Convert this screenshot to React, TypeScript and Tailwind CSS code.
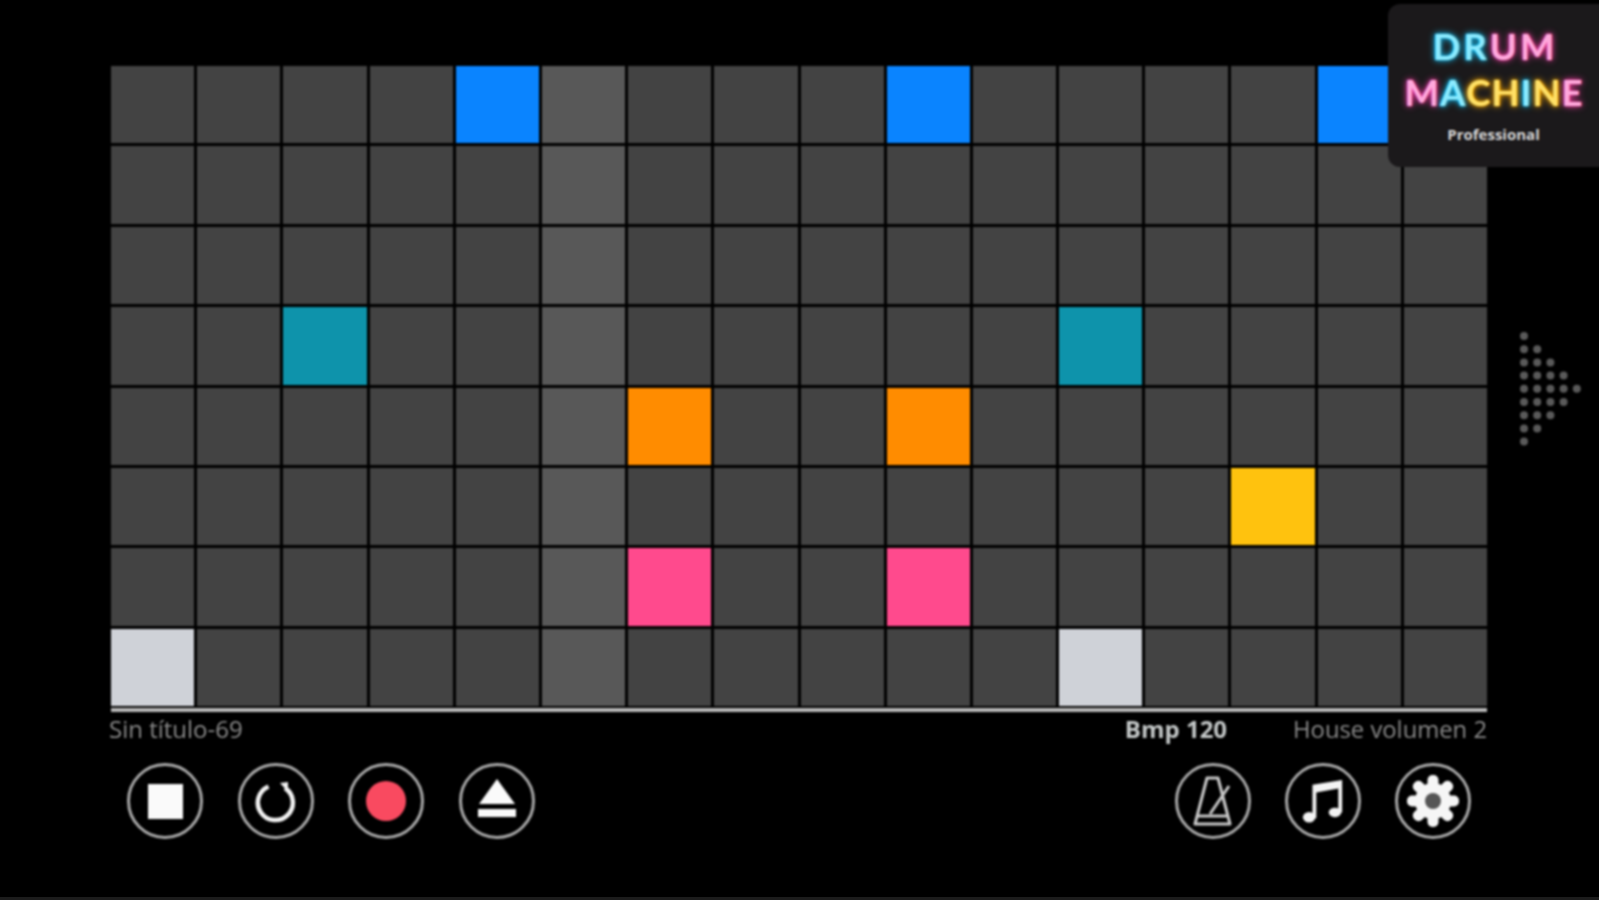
const rows = 8;
const cols = 16;

const activeCells: Record<string, string> = {
  '0-4': 'bg-[#0a84ff]',
  '0-9': 'bg-[#0a84ff]',
  '0-14': 'bg-[#0a84ff]',
  '3-2': 'bg-[#0e93ab]',
  '3-11': 'bg-[#0e93ab]',
  '4-6': 'bg-[#ff8c00]',
  '4-9': 'bg-[#ff8c00]',
  '5-13': 'bg-[#ffc20e]',
  '6-6': 'bg-[#ff4a8d]',
  '6-9': 'bg-[#ff4a8d]',
  '7-0': 'bg-[#cfd2d8]',
  '7-11': 'bg-[#cfd2d8]',
};

const cyan = 'text-[#8beaff] [text-shadow:0_0_7px_#18c8ff,0_0_3px_#18c8ff]';
const pink = 'text-[#ffa8dc] [text-shadow:0_0_7px_#ff3fa8,0_0_3px_#ff3fa8]';
const yellow = 'text-[#ffe066] [text-shadow:0_0_7px_#ffae00,0_0_3px_#ffae00]';

const drum = [
  ['D', cyan],
  ['R', cyan],
  ['U', pink],
  ['M', pink],
];

const machine = [
  ['M', pink],
  ['A', cyan],
  ['C', yellow],
  ['H', yellow],
  ['I', cyan],
  ['N', yellow],
  ['E', pink],
];

function Logo() {
  return (
    <div className="absolute top-[4px] right-[-4px] w-[215px] h-[163px] rounded-l-xl bg-[#1b191b] flex flex-col items-center pt-[19px] pr-[4px] font-['Lato',sans-serif] font-bold text-[36.5px] leading-[46px]">
      <div className="flex gap-[3px] h-[46px]">
        {drum.map(([letter, color], i) => (
          <span key={i} className={color}>{letter}</span>
        ))}
      </div>
      <div className="flex gap-[1px] h-[46px]">
        {machine.map(([letter, color], i) => (
          <span key={i} className={color}>{letter}</span>
        ))}
      </div>
      <div className="mt-[11px] text-[15px] leading-[16px] font-bold text-[#d8d8d8] font-['Open_Sans',sans-serif]">Professional</div>
    </div>
  );
}

function NextArrow() {
  const counts = [1, 2, 3, 4, 5, 4, 3, 2, 1];
  return (
    <svg className="absolute left-[1518px] top-[330px]" width="66" height="118" viewBox="0 0 66 118">
      {counts.map((count, row) =>
        Array.from({ length: count }).map((_, col) => (
          <circle key={`${row}-${col}`} cx={6 + col * 13.2} cy={6 + row * 13.2} r="4" fill="#5a5a5a" />
        ))
      )}
    </svg>
  );
}

function RoundButton({ children }: { children: React.ReactNode }) {
  return (
    <div className="w-[76px] h-[76px] rounded-full border-[3px] border-[#a8a8a8] flex items-center justify-center">
      {children}
    </div>
  );
}

function LoopIcon() {
  return (
    <svg width="44" height="44" viewBox="0 0 44 44" fill="none">
      <path d="M14.5 7.5 A17.5 17.5 0 1 0 31 9" stroke="#f2f2f2" strokeWidth="4.5" />
      <path d="M26 4 L34 3 L34 13 Z" fill="#f2f2f2" />
    </svg>
  );
}

function EjectIcon() {
  return (
    <svg width="44" height="44" viewBox="0 0 44 44" fill="#fafafa">
      <path d="M22 0 L40 25 L4 25 Z" />
      <rect x="3" y="30" width="38" height="8" />
    </svg>
  );
}

function MetronomeIcon() {
  return (
    <svg width="44" height="58" viewBox="0 0 44 58" fill="none" stroke="#c8c8c8" strokeWidth="3" strokeLinejoin="round">
      <path d="M16 6 L27 6 L39 52 L4 52 Z" />
      <path d="M6 44 L37 44" />
      <path d="M19 42 L38 14" />
    </svg>
  );
}

function NotesIcon() {
  return (
    <svg width="44" height="46" viewBox="0 0 46 48" fill="#f4f4f4">
      <path d="M12 7 L43 2 L43 36 L39 36 L39 11 L16 15 L16 42 L12 42 Z" />
      <ellipse cx="8.5" cy="41" rx="6.5" ry="5.5" />
      <ellipse cx="35.5" cy="36" rx="6.5" ry="5" />
    </svg>
  );
}

function GearIcon() {
  const teeth = [0, 45, 90, 135, 180, 225, 270, 315];
  return (
    <svg width="56" height="56" viewBox="0 0 56 56">
      <circle cx="28" cy="28" r="18" fill="#f6f6f6" />
      {teeth.map((angle) => (
        <rect key={angle} x="22.5" y="2" width="11" height="14" rx="5" fill="#f6f6f6" transform={`rotate(${angle} 28 28)`} />
      ))}
      <circle cx="28" cy="28" r="8" fill="#555555" />
    </svg>
  );
}

export default function App() {
  return (
    <div className="w-full h-[900px] overflow-hidden bg-black">
      <div className="relative h-[900px] pt-[66px] pl-[111px] pr-[112px] font-['Open_Sans',sans-serif] blur-[0.8px]">
        <div className="grid grid-cols-16 gap-[3px]">
          {Array.from({ length: rows }).map((_, r) =>
            Array.from({ length: cols }).map((_, c) => {
              const active = activeCells[`${r}-${c}`];
              return (
                <div
                  key={`${r}-${c}`}
                  className={`h-[77.4px] ${active ? active : c === 5 ? 'bg-[#585858]' : 'bg-[#434343]'}`}
                />
              );
            })
          )}
        </div>

        <div className="h-[4px] mt-[2px] bg-[#b8b8b8]" />

        <div className="flex items-center h-[30px] mt-[2px] text-[24px] leading-[30px]">
          <span className="-ml-[2px] text-[#8a8a8a]">Sin título-69</span>
          <span className="ml-auto mr-[66px] font-bold text-[#c4c8c8]">Bmp 120</span>
          <span className="text-[23.8px] text-[#8a8a8a]">House volumen 2</span>
        </div>

        <div className="flex justify-between mt-[19px] px-[16px]">
          <div className="flex gap-[34.5px]">
            <RoundButton>
              <div className="w-[35px] h-[35px] bg-[#fafafa]" />
            </RoundButton>
            <RoundButton>
              <LoopIcon />
            </RoundButton>
            <RoundButton>
              <div className="w-[40px] h-[40px] rounded-full bg-[#f94a60]" />
            </RoundButton>
            <RoundButton>
              <EjectIcon />
            </RoundButton>
          </div>
          <div className="flex gap-[34px]">
            <RoundButton>
              <MetronomeIcon />
            </RoundButton>
            <RoundButton>
              <NotesIcon />
            </RoundButton>
            <RoundButton>
              <GearIcon />
            </RoundButton>
          </div>
        </div>

        <NextArrow />
        <Logo />
      </div>
      <div className="relative -mt-[3px] h-[3px] bg-[#1c1c1c]" />
    </div>
  );
}
